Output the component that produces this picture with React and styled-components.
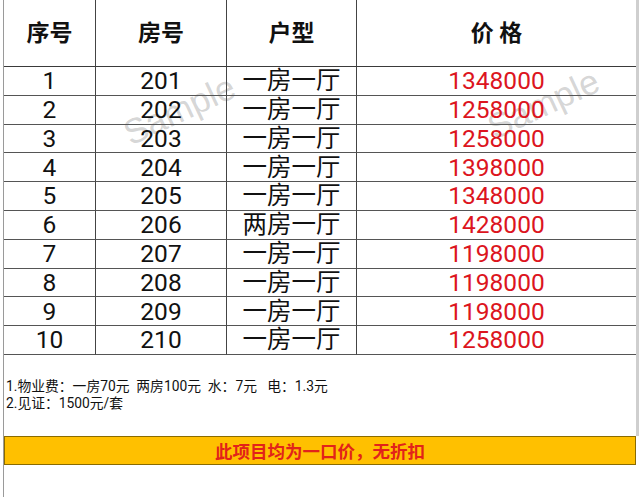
import React from 'react';
import styled, { createGlobalStyle } from 'styled-components';

const GlobalStyle = createGlobalStyle`
  html, body {
    margin: 0;
    padding: 0;
    background: #ffffff;
  }
  body {
    font-family: Roboto, "Noto Sans CJK SC", sans-serif;
    color: #111;
  }
`;

const Page = styled.div`
  width: 640px;
  height: 497px;
  padding-left: 3px;
  box-sizing: border-box;
  overflow: hidden;
`;

const Sheet = styled.div`
  position: relative;
  width: 633px;
  height: 497px;
  border-left: 1px solid #9a9a9a;
  box-sizing: border-box;
`;

const Board = styled.div`
  position: relative;
  width: 635px;
  border-right: 3px solid #cfcfcf;
  box-sizing: border-box;
`;

const Grid = styled.div`
  position: relative;
  display: grid;
  grid-template-columns: 92px 131px 130px 1fr;
  grid-template-rows: 67px repeat(10, 28.8px);
`;

const Cell = styled.div`
  position: relative;
  z-index: 1;
  display: flex;
  align-items: center;
  justify-content: center;
  border-bottom: 1px solid ${p => (p.$head ? '#3a3a3a' : '#555')};
  border-right: ${p => (p.$last ? 'none' : '1px solid #444')};
  font-size: ${p => (p.$head ? '23px' : '24.5px')};
  font-weight: ${p => (p.$head ? 700 : 400)};
  color: ${p => (p.$red ? '#dc1420' : '#111')};
  white-space: pre;
  line-height: 1;
  padding-top: ${p => (p.$head ? '0' : '1px')};
`;

const Watermark = styled.div`
  position: absolute;
  z-index: 0;
  font-family: "Liberation Sans", Arial, sans-serif;
  font-size: 35px;
  color: rgba(150, 150, 150, 0.4);
  transform: rotate(-25deg);
  transform-origin: center;
  white-space: nowrap;
  pointer-events: none;
`;

const Notes = styled.div`
  height: 81px;
  padding: 23px 0 0 2px;
  box-sizing: border-box;
  font-size: 13.8px;
  line-height: 17px;
  color: #111;
  white-space: pre;
`;

const Banner = styled.div`
  height: 29px;
  background: #ffc000;
  border: 1px solid #8a6b00;
  box-sizing: border-box;
  display: flex;
  align-items: center;
  justify-content: center;
  color: #e2231a;
  font-size: 17.5px;
  font-weight: 700;
`;

const rows = [
  [1, 201, '一房一厅', 1348000],
  [2, 202, '一房一厅', 1258000],
  [3, 203, '一房一厅', 1258000],
  [4, 204, '一房一厅', 1398000],
  [5, 205, '一房一厅', 1348000],
  [6, 206, '两房一厅', 1428000],
  [7, 207, '一房一厅', 1198000],
  [8, 208, '一房一厅', 1198000],
  [9, 209, '一房一厅', 1198000],
  [10, 210, '一房一厅', 1258000],
];

export default function App() {
  return (
    <Page>
      <GlobalStyle />
      <Sheet>
        <Board>
          <Grid>
            <Watermark style={{ left: 116, top: 90 }}>Sample</Watermark>
            <Watermark style={{ left: 480, top: 84 }}>Sample</Watermark>
            <Cell $head>序号</Cell>
            <Cell $head>房号</Cell>
            <Cell $head>户型</Cell>
            <Cell $head $last>{'价 格'}</Cell>
            {rows.map(r => (
              <React.Fragment key={r[0]}>
                <Cell>{r[0]}</Cell>
                <Cell>{r[1]}</Cell>
                <Cell>{r[2]}</Cell>
                <Cell $last $red>{r[3]}</Cell>
              </React.Fragment>
            ))}
          </Grid>
          <Notes>
            <div>{'1.物业费：一房70元  两房100元  水：7元   电：1.3元'}</div>
            <div>2.见证：1500元/套</div>
          </Notes>
        </Board>
        <Banner>此项目均为一口价，无折扣</Banner>
      </Sheet>
    </Page>
  );
}
